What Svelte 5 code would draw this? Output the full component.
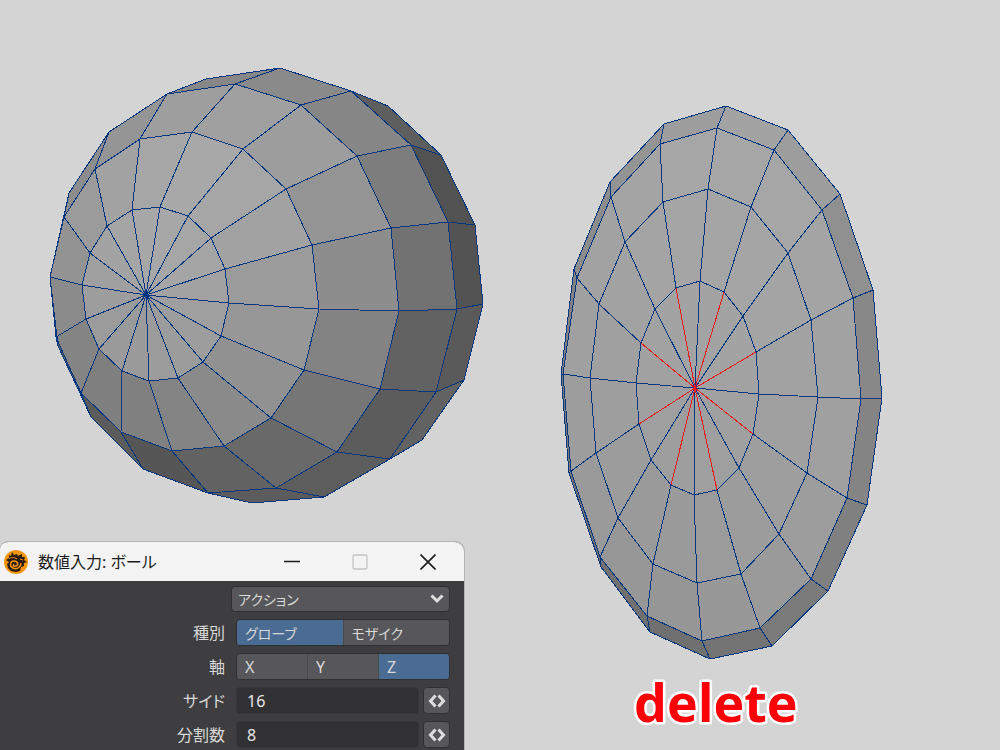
<script>
  const ball = {
    center: [146, 295],
    rings: [
      [[160, 207], [188, 216], [211, 238], [225, 269], [229, 303], [221, 336], [203, 362], [178, 378],
       [149, 381], [122, 371], [99, 349], [86, 319], [82, 285], [90, 253], [107, 226], [132, 210]],
      [[192, 132], [243, 149], [286, 189], [312, 245], [319, 309], [304, 370], [271, 418], [224, 446],
       [172, 451], [121, 432], [81, 393], [56, 337], [50, 277], [64, 217], [95, 169], [140, 139]],
      [[235, 84], [301, 105], [357, 156], [391, 228], [399, 311], [380, 389], [337, 452], [276, 488],
       [208, 493], [143, 469], [91, 417], [58, 346], [50, 277], [69, 193], [109, 132], [167, 94]],
      [[280, 68], [351, 91], [411, 145], [448, 222], [457, 309], [436, 392], [390, 459], [324, 497],
       [252, 503], null, null, null, null, null, null, [206, 79]],
      [null, [388, 106], [441, 155], [475, 225], [483, 304], [464, 380], [422, 440], null,
       null, null, null, null, null, null, null, null]
    ],
    shades: [
      [167, 166, 165, 162, 159, 157, 156, 155, 154, 154, 155, 157, 160, 163, 165, 167],
      [168, 166, 162, 155, 151, 145, 138, 132, 128, 127, 132, 139, 147, 155, 162, 166],
      [160, 157, 148, 141, 131, 118, 105, 98, 86, 92, 98, 120, 136, 140, 149, 158],
      [138, 134, 125, 114, 98, 92, 93, 92, 0, 0, 0, 0, 0, 0, 0, 135],
      [0, 94, 82, 83, 90, 98, 0, 0, 0, 0, 0, 0, 0, 0, 0, 0]
    ]
  };

  const disc = {
    center: [695, 388],
    rings: [
      [[700, 281], [724, 292], [743, 316], [756, 352], [759, 394], [753, 434], [739, 468], [717, 490],
       [694, 495], [671, 485], [651, 460], [639, 424], [636, 383], [641, 343], [655, 309], [676, 288]],
      [[708, 189], [751, 207], [788, 253], [811, 320], [818, 397], [807, 473], [779, 534], [741, 574],
       [697, 583], [653, 564], [618, 518], [596, 453], [590, 378], [599, 304], [625, 242], [663, 202]],
      [[717, 128], [774, 150], [822, 210], [853, 298], [861, 399], [847, 498], [811, 579], [760, 628],
       [702, 641], [647, 616], [600, 557], [571, 471], [563, 374], [577, 278], [611, 197], [660, 144]],
      [[726, 106], [788, 130], [840, 194], [873, 290], [882, 398], [867, 505], [828, 591], [772, 646],
       [710, 659], [650, 632], [601, 567], [569, 473], [561, 374], [574, 269], [610, 182], [664, 124]]
    ],
    shades: [
      [163, 163, 163, 162, 161, 160, 159, 159, 158, 158, 159, 160, 161, 162, 163, 163],
      [165, 165, 164, 162, 160, 158, 156, 155, 154, 154, 156, 158, 160, 162, 164, 165],
      [166, 166, 164, 162, 160, 157, 154, 152, 150, 151, 154, 157, 160, 162, 164, 166],
      [163, 157, 144, 136, 132, 128, 122, 115, 112, 112, 116, 122, 130, 140, 148, 157]
    ]
  };

  const deleted = [1, 3, 5, 7, 9, 11, 13, 15];

  function faces(mesh) {
    const result = [];
    mesh.rings.forEach((ring, r) => {
      ring.forEach((point, i) => {
        const next = (i + 1) % ring.length;
        const inner = r === 0 ? [mesh.center] : [mesh.rings[r - 1][next], mesh.rings[r - 1][i]];
        const corners = [point, ring[next], ...inner];
        if (corners.every(Boolean)) {
          const grey = mesh.shades[r][i];
          result.push({ points: corners.join(' '), fill: `rgb(${grey}, ${grey}, ${grey})` });
        }
      });
    });
    return result;
  }

  const meshes = [
    { name: 'ball', faces: faces(ball) },
    { name: 'disc', faces: faces(disc) }
  ];

  const kinds = ['グローブ', 'モザイク'];
  const axes = ['X', 'Y', 'Z'];

  let kind = $state('グローブ');
  let axis = $state('Z');
  let fields = $state([
    { id: 'sides', label: 'サイド', value: 16 },
    { id: 'segments', label: '分割数', value: 8 }
  ]);
</script>

<main class="stage">
  <svg class="viewport" viewBox="0 0 1000 750">
    {#each meshes as mesh (mesh.name)}
      <g class="mesh">
        {#each mesh.faces as face}
          <polygon points={face.points} fill={face.fill} />
        {/each}
      </g>
    {/each}
    <g class="deleted">
      {#each deleted as i}
        <line x1={disc.center[0]} y1={disc.center[1]} x2={disc.rings[0][i][0]} y2={disc.rings[0][i][1]} />
      {/each}
    </g>
    <text class="caption" x="634" y="722">delete</text>
  </svg>

  <section class="dialog" aria-labelledby="dialog-title">
    <header class="titlebar">
      <svg class="logo" viewBox="0 0 24 24" width="24" height="24" aria-hidden="true">
        <circle cx="12" cy="12" r="12" fill="#f3960f" />
        <path d="M2 10l3-2 0-3 2 1 1-4 2 3 3-1 1 2 4-2 0 3 3 0-1 3 3 2-3 1 0 3-3 1-1 4-4 1-5-1-3-3-1-4 2-2z" fill="#2b1c0d" />
        <path d="M17 13c0 4-4 7-8 5s-3-7 1-7 5 4 2 5-3-1-2-2" fill="none" stroke="#f3960f" stroke-width="1.500" />
        <path d="M5 9c2-2 5-2 8 0M16 9l3 1" fill="none" stroke="#f3960f" stroke-width="1" />
      </svg>
      <h1 id="dialog-title">数値入力: ボール</h1>
      <div class="window-buttons">
        <button aria-label="最小化">
          <svg viewBox="0 0 16 16" width="16" height="16"><path d="M0 7.500h16" stroke="#1b1b1b" stroke-width="1.600" /></svg>
        </button>
        <button aria-label="最大化" disabled>
          <svg viewBox="0 0 16 16" width="16" height="16"><rect x="1" y="1" width="14" height="14" rx="1.500" fill="none" stroke="#c4c4c4" stroke-width="1.300" /></svg>
        </button>
        <button aria-label="閉じる">
          <svg viewBox="0 0 16 16" width="16" height="16"><path d="M.5 .5l15 15M15.500 .5l-15 15" stroke="#1b1b1b" stroke-width="1.600" /></svg>
        </button>
      </div>
    </header>

    <div class="form">
      <div class="action">
        <select aria-label="アクション">
          <option>アクション</option>
        </select>
        <svg class="chevron" viewBox="0 0 14 10" width="14" height="10" aria-hidden="true"><path d="M1.500 1.500L7 7l5.500-5.500" fill="none" stroke="#dedede" stroke-width="3" /></svg>
      </div>

      <div class="row" role="group" aria-labelledby="kind-label">
        <span class="label" id="kind-label">種別</span>
        <div class="segments kinds">
          {#each kinds as name}
            <button class:active={kind === name} aria-pressed={kind === name} onclick={() => (kind = name)}>{name}</button>
          {/each}
        </div>
      </div>

      <div class="row" role="group" aria-labelledby="axis-label">
        <span class="label" id="axis-label">軸</span>
        <div class="segments">
          {#each axes as name}
            <button class:active={axis === name} aria-pressed={axis === name} onclick={() => (axis = name)}>{name}</button>
          {/each}
        </div>
      </div>

      {#each fields as field (field.id)}
        <div class="row">
          <label class="label" for={field.id}>{field.label}</label>
          <div class="number">
            <input id={field.id} type="text" inputmode="numeric" bind:value={field.value} />
            <button aria-label="{field.label}を増やす" onclick={() => (field.value = Number(field.value) + 1)}>
              <svg viewBox="0 0 18 14" width="18" height="14"><path d="M7.500 1.500L2.500 7l5 5.500M10.500 1.500L15.500 7l-5 5.500" fill="none" stroke="#dedede" stroke-width="3" /></svg>
            </button>
          </div>
        </div>
      {/each}
    </div>
  </section>
</main>

<style>
  :global(body) {
    margin: 0;
    background: #d4d4d4;
  }

  .stage {
    position: relative;
    min-height: 100vh;
    overflow: hidden;
    font-family: "Noto Sans", "Noto Sans CJK JP", sans-serif;
    font-size: 16px;
  }

  .viewport {
    display: block;
    width: 100%;
  }

  .mesh polygon {
    stroke: #003580;
    stroke-width: 1;
    stroke-linejoin: round;
    shape-rendering: crispEdges;
  }

  .deleted line {
    stroke: #f01414;
    stroke-width: 1;
    shape-rendering: crispEdges;
  }

  .caption {
    font-family: "Open Sans", "Noto Sans", sans-serif;
    font-size: 52px;
    font-weight: 700;
    fill: #fb0007;
    stroke: #fff;
    stroke-width: 5;
    stroke-linejoin: round;
    paint-order: stroke;
  }

  .dialog {
    position: absolute;
    left: 0;
    bottom: 0;
    box-sizing: border-box;
    width: 465px;
    border-top: 1px solid #b4b4b4;
    border-right: 1px solid #b4b4b4;
    border-radius: 8px 10px 0 0;
    background: #3e3e40;
    overflow: hidden;
  }

  .titlebar {
    display: flex;
    align-items: center;
    gap: 10px;
    height: 39px;
    padding: 0 2px 0 4px;
    background: #f3f3f3;
  }

  h1 {
    flex: 1;
    margin: 0;
    font-size: 16px;
    font-weight: 400;
    line-height: 24px;
    color: #1b1b1b;
    font-feature-settings: "palt";
  }

  .window-buttons {
    display: flex;
  }

  .window-buttons button {
    display: flex;
    align-items: center;
    justify-content: center;
    width: 68px;
    height: 36px;
    padding: 0;
    border: 0;
    background: none;
  }

  .form {
    display: flex;
    flex-direction: column;
    gap: 7px;
    padding: 5px 14px 2px 0;
    color: #d8d8d8;
    font-feature-settings: "palt";
  }

  .action {
    position: relative;
    margin-left: 231px;
  }

  select {
    appearance: none;
    display: block;
    box-sizing: border-box;
    width: 100%;
    height: 26px;
    padding: 0 6px;
    border: 1px solid #303032;
    border-radius: 4px;
    background: #57575b;
    color: inherit;
    font: inherit;
    font-size: 14px;
    font-feature-settings: inherit;
  }

  .chevron {
    position: absolute;
    top: 8px;
    right: 6px;
    pointer-events: none;
  }

  .row {
    display: grid;
    grid-template-columns: 225px minmax(0, 1fr);
    column-gap: 11px;
    align-items: center;
    height: 27px;
  }

  .label {
    text-align: right;
    line-height: 24px;
  }

  .segments {
    display: flex;
    height: 27px;
    border-radius: 4px;
    overflow: hidden;
    border: 1px solid #303032;
    box-sizing: border-box;
  }

  .segments button {
    flex: 1;
    padding: 0 8px;
    border: 0;
    border-right: 1px solid #4a4a4d;
    background: #57575b;
    color: inherit;
    font: inherit;
    font-feature-settings: inherit;
    text-align: left;
  }

  .kinds button {
    font-size: 14px;
  }

  .segments button:last-child {
    border-right: 0;
  }

  .segments button.active {
    background: #4a6b92;
  }

  .number {
    display: flex;
    gap: 4px;
  }

  input {
    flex: 1;
    min-width: 0;
    box-sizing: border-box;
    height: 27px;
    padding: 0 10px;
    border: 1px solid #37373a;
    border-radius: 4px;
    background: #313133;
    color: #e6e6e6;
    font: inherit;
  }

  .number button {
    display: flex;
    align-items: center;
    justify-content: center;
    box-sizing: border-box;
    width: 27px;
    height: 27px;
    padding: 0;
    border: 1px solid #303032;
    border-radius: 4px;
    background: #57575b;
  }
</style>
